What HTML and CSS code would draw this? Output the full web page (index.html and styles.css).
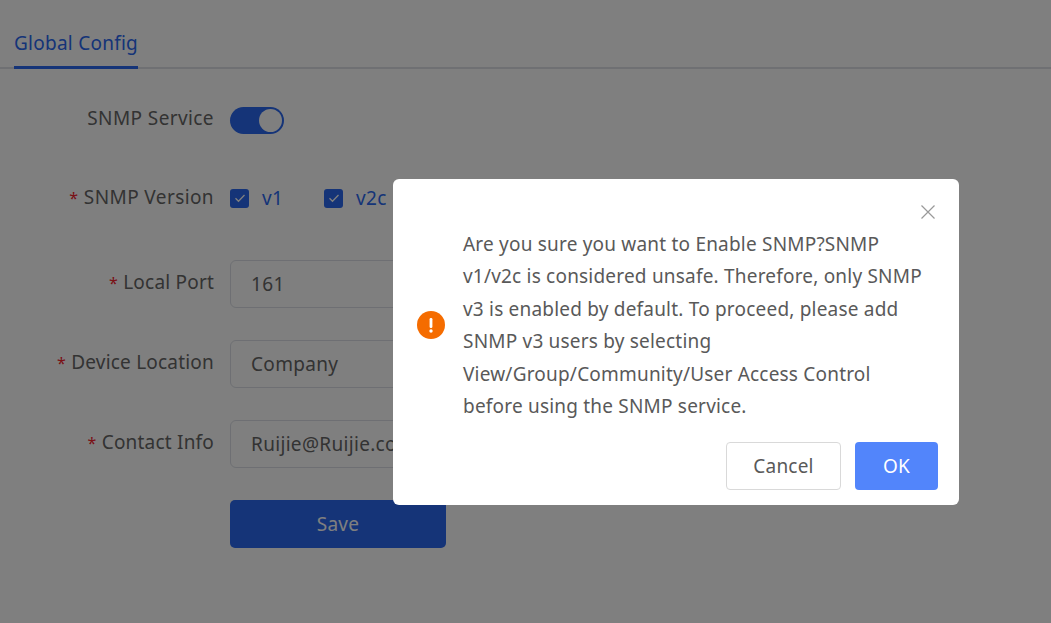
FILE: index.html
```html
<!DOCTYPE html>
<html lang="en">
<head>
<meta charset="utf-8">
<title>Global Config</title>
<link rel="stylesheet" href="styles.css">
</head>
<body>
<div class="page">
  <nav class="tabs"><span class="tab">Global Config</span></nav>
  <form class="form">
    <div class="row row-switch">
      <label class="label">SNMP Service</label>
      <span class="switch"><span class="knob"></span></span>
    </div>
    <div class="row row-check">
      <label class="label"><span class="req">*</span> SNMP Version</label>
      <div class="checks">
        <span class="check"><span class="box"><svg viewBox="0 0 18 18" width="18" height="18"><path d="M4.5 9.2l3 3 6-6.2" fill="none" stroke="#fff" stroke-width="1.3"/></svg></span>v1</span>
        <span class="check"><span class="box"><svg viewBox="0 0 18 18" width="18" height="18"><path d="M4.5 9.2l3 3 6-6.2" fill="none" stroke="#fff" stroke-width="1.3"/></svg></span>v2c</span>
      </div>
    </div>
    <div class="row row-input">
      <label class="label"><span class="req">*</span> Local Port</label>
      <div class="input">161</div>
    </div>
    <div class="row row-input">
      <label class="label"><span class="req">*</span> Device Location</label>
      <div class="input">Company</div>
    </div>
    <div class="row row-input">
      <label class="label"><span class="req">*</span> Contact Info</label>
      <div class="input">Ruijie@Ruijie.com.cn</div>
    </div>
    <div class="row row-save">
      <span></span>
      <button type="button" class="save">Save</button>
    </div>
  </form>
</div>
<div class="overlay"></div>
<div class="modal">
  <svg class="close" viewBox="0 0 14 14" width="14" height="14"><path d="M.5.5l13 13M13.500.5l-13 13" fill="none" stroke="#999" stroke-width="1.2"/></svg>
  <div class="modal-body">
    <svg class="warn" viewBox="0 0 28 28" width="28" height="28"><circle cx="14" cy="14" r="14" fill="#f56c00"/><rect x="12.600" y="7" width="2.800" height="10" rx="1.200" fill="#fff"/><circle cx="14" cy="20" r="1.700" fill="#fff"/></svg>
    <p class="message">Are you sure you want to Enable SNMP?SNMP v1/v2c is considered unsafe. Therefore, only SNMP v3 is enabled by default. To proceed, please add SNMP v3 users by selecting View/Group/Community/User Access Control before using the SNMP service.</p>
  </div>
  <div class="modal-actions">
    <button type="button" class="btn btn-cancel">Cancel</button>
    <button type="button" class="btn btn-ok">OK</button>
  </div>
</div>
</body>
</html>
```
FILE: styles.css
```css
* { box-sizing: border-box; }
html, body { margin: 0; height: 100%; overflow: hidden; }
body { background: #fff; font-family: "Noto Sans", "Open Sans", sans-serif; font-size: 19px; letter-spacing: .32px; color: #666; }
.page { padding: 24px 0 0; }
.tabs { height: 45px; padding-left: 14px; border-bottom: 2px solid #dfe1e6; display: flex; }
.tab { height: 45px; line-height: 38px; border-bottom: 3px solid #2a68f0; color: #2a68f0; width: 124px; white-space: nowrap; letter-spacing: .25px; }
.form { padding-top: 38px; }
.row { display: grid; grid-template-columns: 214px 216px; column-gap: 16px; align-items: center; }
.label { text-align: right; color: #666; white-space: nowrap; line-height: 24px; letter-spacing: .4px; }
.req { color: #f5222d; font-size: 16px; }
.row-switch { height: 27px; margin-bottom: 51px; }
.row-switch .label { margin-top: -5px; }
.row-check { height: 24px; margin-bottom: 51px; }
.row-check .label { margin-top: -1px; }
.row-input { height: 48px; margin-bottom: 32px; }
.row-input .label { margin-top: -4px; letter-spacing: .2px; }
.switch { display: flex; justify-content: flex-end; align-items: center; width: 54px; height: 27px; padding-right: 2px; border-radius: 14px; background: #2a68f0; }
.knob { width: 23px; height: 23px; border-radius: 50%; background: #fff; }
.checks { display: flex; gap: 32px; white-space: nowrap; }
.check { display: flex; align-items: center; gap: 13px; color: #2a68f0; width: 62px; }
.box { flex: none; width: 19px; height: 19px; border-radius: 3px; background: #2a68f0; display: flex; align-items: center; justify-content: center; }
.input { height: 48px; line-height: 46px; padding-left: 20px; border: 1px solid #dcdfe6; border-radius: 6px; color: #666; white-space: nowrap; overflow: hidden; }
.save { height: 48px; border: 0; border-radius: 5px; background: #2a68f0; color: #fff; font: inherit; letter-spacing: inherit; }
.overlay { position: fixed; inset: 0; background: rgba(0, 0, 0, .5); }
.modal { position: fixed; left: 393px; top: 179px; width: 566px; height: 326px; padding: 49px 21px 15px 24px; background: #fff; border-radius: 6px; color: #595959; letter-spacing: .2px; }
.close { position: absolute; right: 24px; top: 26px; }
.modal-body { display: flex; align-items: center; gap: 18px; }
.warn { flex: none; }
.message { margin: 0; line-height: 32.400px; width: 470px; }
.modal-actions { display: flex; justify-content: flex-end; gap: 14px; margin-top: 20px; }
.btn { height: 48px; border-radius: 4px; font: inherit; letter-spacing: inherit; }
.btn-cancel { width: 115px; background: #fff; border: 1px solid #d9d9d9; color: #595959; }
.btn-ok { width: 83px; background: #5285fb; border: 0; color: #fff; }
```
